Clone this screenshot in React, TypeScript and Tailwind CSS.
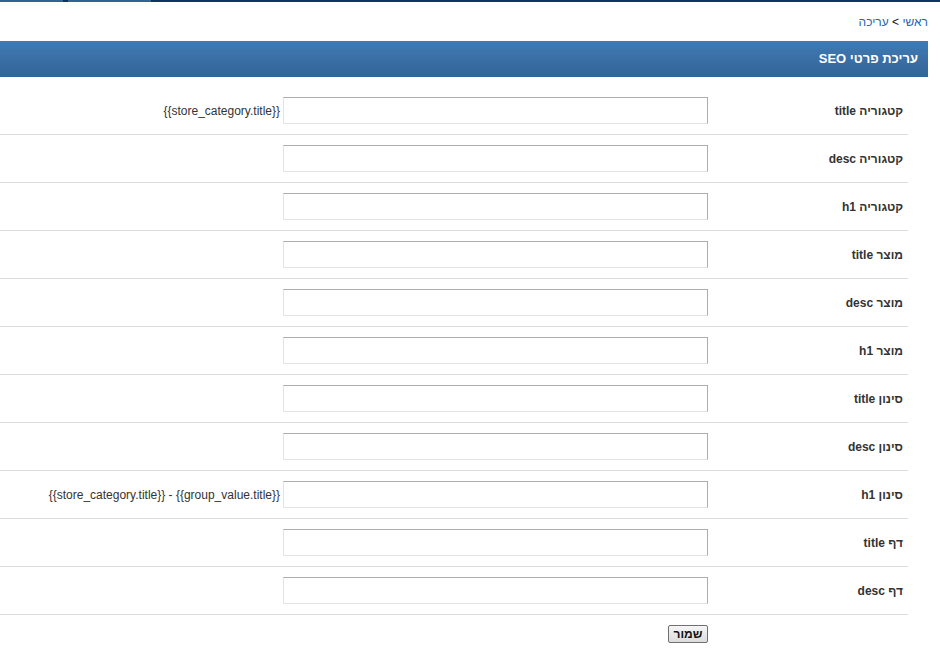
const rows = [
  { label: "קטגוריה title", hint: "{{store_category.title}}" },
  { label: "קטגוריה desc" },
  { label: "קטגוריה h1" },
  { label: "מוצר title" },
  { label: "מוצר desc" },
  { label: "מוצר h1" },
  { label: "סינון title" },
  { label: "סינון desc" },
  { label: "סינון h1", hint: "{{store_category.title}} - {{group_value.title}}" },
  { label: "דף title" },
  { label: "דף desc" },
];

const SeoRow = ({ label, hint }: { label: string; hint?: string }) => (
  <div className="flex h-[48px] items-center border-b border-[#dddddd]">
    <div className="w-[200px] pr-[5px] text-right text-[12px] font-bold text-[#333]">{label}</div>
    <input
      type="text"
      className="h-[27px] w-[425px] border border-t-[#acacac] border-r-[#acacac] border-b-[#e3e3e3] border-l-[#e3e3e3] bg-white outline-none"
    />
    {hint && (
      <div dir="ltr" className="mr-[3px] text-[12px] text-[#333]">
        {hint}
      </div>
    )}
  </div>
);

export default function App() {
  return (
    <div className="min-h-screen bg-white font-['Liberation_Sans',Arial,sans-serif]">
      <div className="flex h-[2px] w-full bg-[#0b3566]">
        <div className="w-[63px] bg-[#2e6599]" />
        <div className="w-[5px]" />
        <div className="w-[83px] bg-[#2e6599]" />
      </div>

      <div dir="rtl" className="w-[928px]">
        <div className="pt-[13px] pb-[12px] text-[12px] leading-[14px]">
          <a className="text-[#2a64b3]">ראשי</a>
          <span className="text-[#111]"> &gt; </span>
          <a className="text-[#2a64b3]">עריכה</a>
        </div>

        <div className="flex h-[36px] items-center bg-gradient-to-b from-[#3f7bb4] to-[#336497] pr-[10px] text-[13px] font-bold text-white">
          עריכת פרטי SEO
        </div>

        <div className="mt-[10px] mr-auto w-[908px]">
          {rows.map((r, i) => (
            <SeoRow key={i} label={r.label} hint={r.hint} />
          ))}
        </div>

        <div className="flex pr-[220px] pt-[10px]">
          <button className="h-[18px] w-[40px] rounded-[2px] border border-[#707070] bg-gradient-to-b from-[#f6f6f6] to-[#dcdcdc] text-[12px] font-bold leading-none text-[#111]">
            שמור
          </button>
        </div>
      </div>
    </div>
  );
}
